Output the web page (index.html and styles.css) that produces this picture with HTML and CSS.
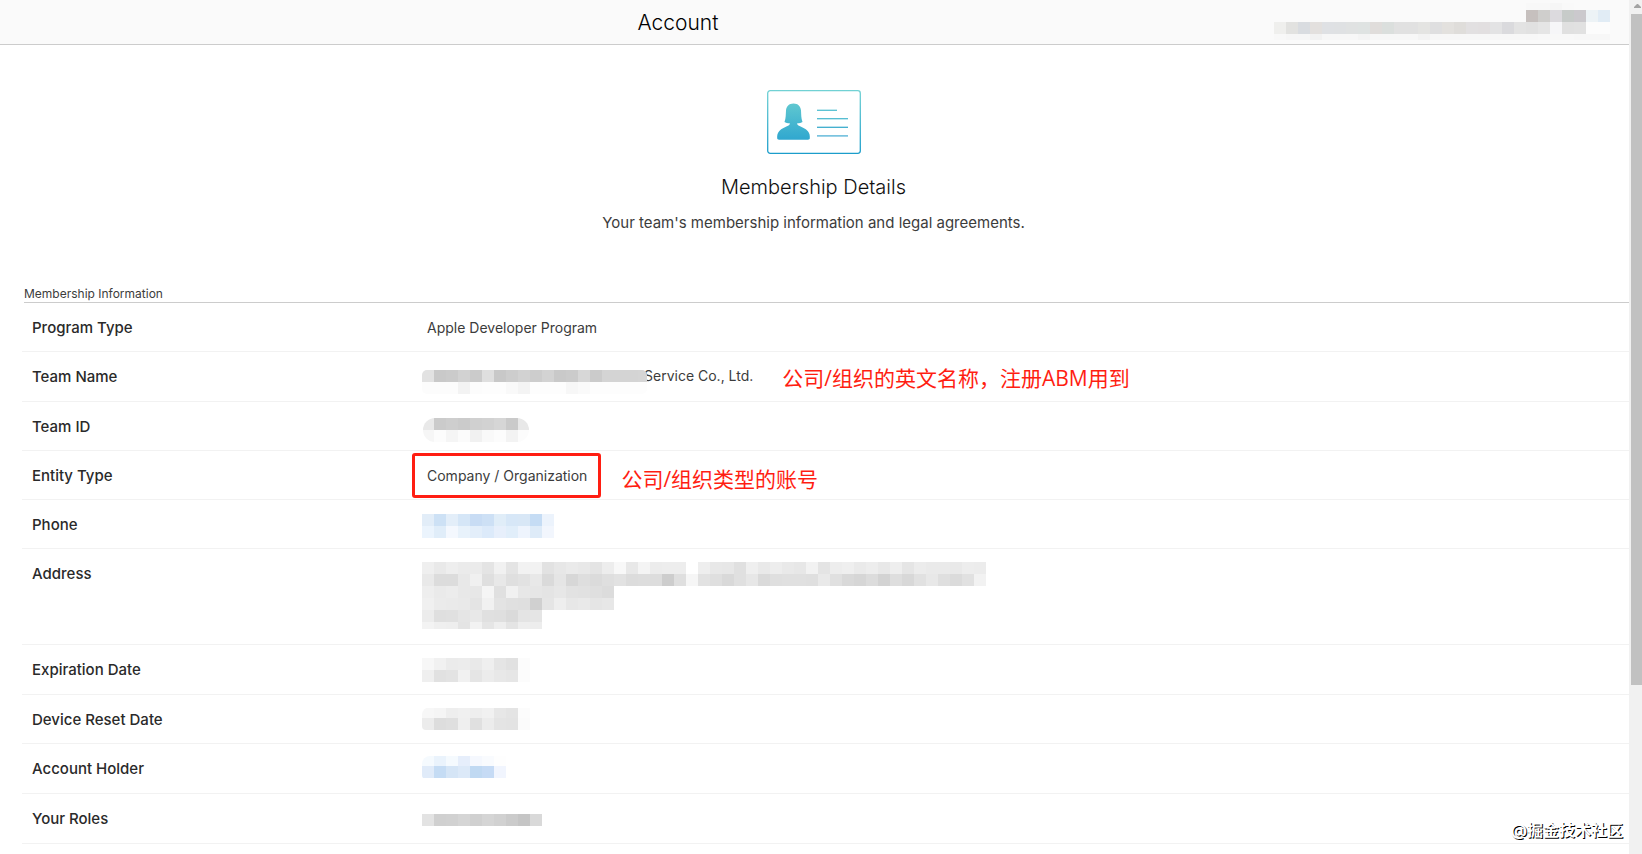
FILE: index.html
```html
<!DOCTYPE html>
<html lang="en">
<head>
<meta charset="utf-8">
<title>Account - Membership Details</title>
<link rel="stylesheet" href="styles.css">
<script src="mosaic.js" defer></script>
</head>
<body>
<div class="window">
  <div class="page">
    <header class="topbar">
      <h1 class="topbar-title">Account</h1>
      <svg class="mosaic" width="348" height="44" data-y="3" data-heights="7 12 12 6" data-tiles="- - - - - - - - - - - - - - - - - - - - - f8 f8 f6 f9 / - - - - - - - - - - - - - - - - - - - - - c6c0be cfcecc dcdade c7cbc9 cbc9cd edf3f6 e1ecf5 / efefed e2e2e0 d9dce0 e3e0de dfe1e4 dfe1e3 e0e2e2 dfe3e2 e0dddb dbdfdd e1 e1 e4e4e2 dfdfe0 e3e1de dfddda e2e0e1 e2dfe0 e3e3e4 dadadd e3 e1 e5 f6f6f8 e0 e1 fc fc / f8 f6 f6 f2 f7 f7 f7 f4 f7 f7 f7 f7 f3 f7 f7 f7 f7 f7 f7 f7 f7 f7 f8 f8 f8 f7 f7 f7"></svg>
    </header>

    <section class="hero">
      <svg class="hero-icon" width="94" height="64" viewBox="0 0 94 64" aria-hidden="true">
        <defs>
          <linearGradient id="card" gradientUnits="userSpaceOnUse" x1="0" y1="0" x2="0" y2="64">
            <stop offset="0" stop-color="#72d2d4"/>
            <stop offset="1" stop-color="#1b9dcb"/>
          </linearGradient>
          <linearGradient id="person" gradientUnits="userSpaceOnUse" x1="0" y1="13" x2="0" y2="50">
            <stop offset="0" stop-color="#60c8d0"/>
            <stop offset="1" stop-color="#30a7cf"/>
          </linearGradient>
        </defs>
        <rect x="0.7" y="0.7" width="92.6" height="62.6" rx="2.5" fill="none" stroke="url(#card)" stroke-width="1.3"/>
        <path fill="url(#person)" d="M26.500 13.500C22 13.500 19.300 16.300 19 20.500C18.700 24.500 19 28 17.500 32C18.800 33 20.500 33.200 22.800 33.200C22.800 34.200 22.600 34.800 21.500 35.500C18 37.500 14.500 38.300 12.300 41C10.300 43.300 10 45.800 10.200 48.300C10.300 49.400 11 49.700 12 49.700H41C42 49.700 42.700 49.400 42.800 48.300C43 45.800 42.700 43.300 40.700 41C38.500 38.300 35 37.500 31.500 35.500C30.400 34.800 30.200 34.200 30.200 33.200C32.500 33.200 34.200 33 35.500 32C34 28 34.300 24.500 34 20.500C33.700 16.300 31 13.500 26.500 13.500Z"/>
        <g stroke-width="1.3">
          <path stroke="#55c0d2" d="M50 20.300H70"/>
          <path stroke="#4fbbd0" d="M50 28.700H81"/>
          <path stroke="#3caccd" d="M50 37.300H81"/>
          <path stroke="#4fb0d5" d="M50 45.900H81"/>
        </g>
      </svg>
      <h2 class="hero-title">Membership Details</h2>
      <p class="hero-text">Your team's membership information and legal agreements.</p>
    </section>

    <section class="details">
      <h3 class="details-title">Membership Information</h3>
      <table class="details-table">
        <tr><th scope="row">Program Type</th><td>Apple Developer Program</td></tr>
        <tr class="roomy"><th scope="row">Team Name</th><td class="redacted"><div class="cell-line">
          <svg class="mosaic mosaic-over" width="228" height="48" data-y="18" data-heights="12 12" data-tiles="e2 c9 cb d2 cb df c8 cd d2 cd d3 c9 cb d7 cb d4 d4 d4 d5 / fc fc fc f3 fc fd fd f9 f4 fd fd fd f7 fa fd fd fd fd fd"></svg>
          <span class="team-suffix">Service Co., Ltd.</span>
          <span class="note note-team" lang="zh">公司/组织的英文名称，注册ABM用到</span></div></td></tr>
        <tr><th scope="row">Team ID</th><td class="redacted"><svg class="mosaic mosaic-pill" width="108" height="48" data-y="16" data-heights="12 12" data-tiles="e9 cb ce cb d0 d2 d6 ca e8 / f6 fc f5 fb f1 f9 fc f3 fc"></svg></td></tr>
        <tr><th scope="row">Entity Type</th><td><div class="cell-line cell-line-top"><span class="marked">Company / Organization</span><span class="note note-entity" lang="zh">公司/组织类型的账号</span></div></td></tr>
        <tr><th scope="row">Phone</th><td class="redacted"><svg class="mosaic" width="132" height="48" data-y="14" data-heights="12 12" data-tiles="e2edf8 cde1f5 e3eef9 d5e6f7 c8dcf4 cde0f5 e0edf8 d7e7f7 d8e7f6 c5dcf4 ecf3fc / ebf4fd e0edf9 f4f8fe e8f2fb e3eefa dceafa e7effb e1eefa eef4fd deebf8 f2f6fd"></svg></td></tr>
        <tr class="address"><th scope="row">Address</th><td class="redacted"><svg class="mosaic" width="564" height="94" data-y="13" data-heights="12 12 12 12 12 7" data-tiles="ef e9 ee eb eb e4 f1 e4 f2 f2 e2 e7 ea e8 e4 ed f8 e8 f4 ec ed ed - ee e8 e7 e0 ef e9 ed e9 e7 f2 e4 ed ef ea ed e8 ee e5 ec ea ea e9 ed ec / e9 dc dc e8 f0 df e8 df e2 e8 da e5 d7 de db df e2 dc dd dd cd df f6 e2 df d9 e0 e7 da df e0 e0 df e9 e0 d9 d6 dc d3 de d8 e1 e8 df db e1 f2 / ee ea ec e8 e7 f5 e0 f1 e7 e6 e4 e7 e2 e1 df dc / f0 eb ea e9 e4 f1 e3 e0 df d0 e5 ee e7 e9 e5 e7 / ec df e0 e5 e8 e0 df da e4 e5 / f3 ef ee e4 f2 e5 ee e4 ee ed"></svg></td></tr>
        <tr class="roomy"><th scope="row">Expiration Date</th><td class="redacted"><svg class="mosaic" width="108" height="48" data-y="13" data-heights="12 12" data-tiles="f7 f1 eb ec e9 ef e5 e1 fc / ef e1 e3 f1 e5 ec e8 e6 fc"></svg></td></tr>
        <tr><th scope="row">Device Reset Date</th><td class="redacted"><svg class="mosaic mosaic-soft" width="108" height="48" data-y="13" data-heights="10 12" data-tiles="f7 f5 ee f0 ee f1 e7 e4 fc / ec dd df ef e0 ec e4 e3 fb"></svg></td></tr>
        <tr class="roomy"><th scope="row">Account Holder</th><td class="redacted"><svg class="mosaic mosaic-soft" width="84" height="48" data-y="11" data-heights="11 12" data-tiles="f5fafe eaf3fc f5fafe e6eefb f5f8fe f9fbfe fefefe / e0ebf9 c5dcf4 d5e5f6 dce9f8 c0d9f2 c6dbf5 f1f5fe"></svg></td></tr>
        <tr class="roomy"><th scope="row">Your Roles</th><td class="redacted"><svg class="mosaic" width="120" height="48" data-y="20" data-heights="12" data-tiles="e3 d0 d1 d5 d0 d5 d1 cb c5 d9"></svg></td></tr>
      </table>
    </section>
    <p class="watermark" lang="zh">@掘金技术社区</p>
  </div>

  <div class="scrollbar" aria-hidden="true">
    <svg class="scroll-arrow" width="13" height="14" viewBox="0 0 13 14"><path fill="#a3a3a3" d="M5 8V7L8 4H9L12 7V8Z"/></svg>
    <div class="scroll-thumb"></div>
  </div>
</div>
</body>
</html>
```
FILE: styles.css
```css
* {
  box-sizing: border-box;
}

body {
  margin: 0;
  background: #fff;
  color: #3c3c3c;
  font-family: Inter, "Noto Sans CJK SC", sans-serif;
  font-size: 14px;
  line-height: 20px;
}

h1, h2, h3, p {
  margin: 0;
  font-weight: 400;
}

.window {
  display: flex;
  height: 100vh;
  overflow: hidden;
}

.page {
  position: relative;
  flex: 1;
  min-width: 0;
}

/* Top bar */
.topbar {
  display: flex;
  justify-content: space-between;
  align-items: flex-end;
  height: 45px;
  padding: 0 7px 0 calc(50% - 177px);
  border-bottom: 1px solid #ccc;
  background: #fafafa;
}

.topbar-title {
  color: #000;
  font-size: 21px;
  font-weight: 300;
  line-height: 42px;
}

/* Intro */
.hero {
  display: flex;
  flex-direction: column;
  align-items: center;
  padding: 45px 2px 0 0;
}

.hero-title {
  margin-top: 20px;
  color: #111;
  font-size: 20px;
  font-weight: 300;
  line-height: 26px;
}

.hero-text {
  margin-top: 13px;
  font-size: 15px;
}

/* Details */
.details {
  padding: 53px 0 0 22px;
}

.details-title {
  margin-left: 2px;
  border-bottom: 1px solid #ccc;
  font-size: 12px;
  line-height: 16px;
}

.details-table {
  width: 100%;
  border-collapse: separate;
  border-spacing: 0;
  table-layout: fixed;
}

.details-table th,
.details-table td {
  height: 49px;
  padding: 15px 10px 0;
  border-bottom: 1px solid #f2f2f2;
  text-align: left;
  vertical-align: top;
}

.details-table th {
  width: 395px;
  color: #2a2a2a;
  font-size: 15px;
  font-weight: 500;
}

.details-table .roomy th,
.details-table .roomy td {
  height: 50px;
}

.details-table .address th,
.details-table .address td {
  height: 96px;
}

.details-table .redacted {
  padding: 0 0 0 5px;
}

.mosaic {
  display: block;
  flex: none;
}

/* Lies over the first letters of the text after it */
.mosaic-over {
  position: relative;
  margin-right: -6px;
  clip-path: inset(18px 3px 6px 0 round 5px);
}

.mosaic-pill {
  clip-path: inset(16px 1px 8px round 12px);
}

.mosaic-soft {
  clip-path: inset(12px 0 13px round 8px 0 0 4px);
}

.cell-line {
  display: flex;
  align-items: center;
  white-space: nowrap;
}

.cell-line-top {
  align-items: flex-start;
}

.marked {
  position: relative;
}

.marked::after {
  content: "";
  position: absolute;
  inset: -13px -14px -12px -15px;
  border: 3px solid #ff1e12;
  border-radius: 3px;
}

.note {
  padding-top: 3px;
  color: #ff1e12;
  font-family: "Open Sans", "Noto Sans CJK SC", sans-serif;
  font-size: 21px;
}

.note-team {
  margin-left: 29px;
}

.note-entity {
  margin-left: 34px;
}

.watermark {
  position: absolute;
  right: 6px;
  bottom: 14px;
  color: #fff;
  font-size: 16px;
  font-weight: 700;
  text-shadow: 1px 1px 0 #000;
}

/* Scrollbar */
.scrollbar {
  width: 13px;
  padding-left: 2px;
  background: #f1f1f1;
}

.scroll-arrow {
  display: block;
  margin-left: -2px;
}

.scroll-thumb {
  height: 78.6%;
  background: #c1c1c1;
}
```
FILE: mosaic.js
```javascript
// Fills each redaction mosaic with square tiles.
// Tiles are greys ("e5"), full colours ("cde1f5") or gaps ("-"); "/" starts a new row.
const TILE = 12;

document.querySelectorAll(".mosaic").forEach((svg) => {
  const heights = svg.dataset.heights.split(" ").map(Number);
  let y = Number(svg.dataset.y);
  svg.dataset.tiles.split(" / ").forEach((row, r) => {
    row.split(" ").forEach((tone, i) => {
      if (tone === "-") return;
      const rect = document.createElementNS("http://www.w3.org/2000/svg", "rect");
      rect.setAttribute("x", i * TILE);
      rect.setAttribute("y", y);
      rect.setAttribute("width", TILE);
      rect.setAttribute("height", heights[r]);
      rect.setAttribute("fill", "#" + (tone.length === 2 ? tone.repeat(3) : tone));
      svg.appendChild(rect);
    });
    y += heights[r];
  });
});
```
